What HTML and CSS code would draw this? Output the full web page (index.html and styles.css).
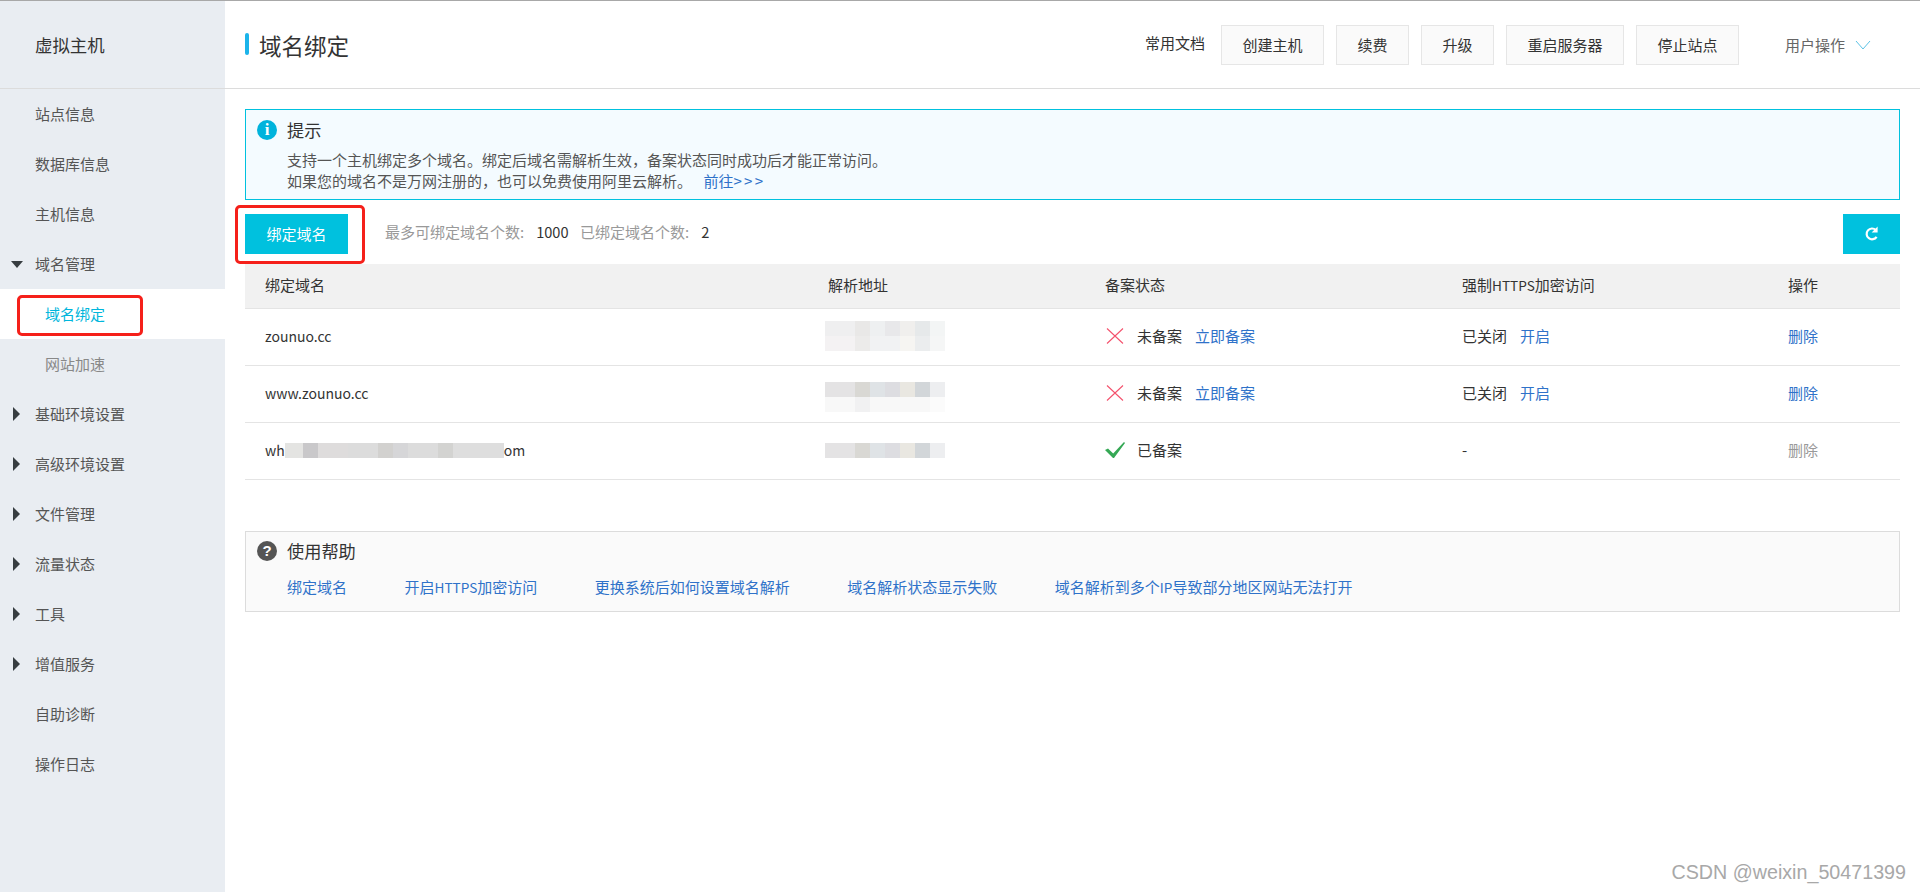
FILE: index.html
```html
<!DOCTYPE html>
<html lang="zh-CN">
<head>
<meta charset="utf-8">
<title>域名绑定</title>
<link rel="stylesheet" href="styles.css">
</head>
<body>
<div class="app">
  <aside class="sidebar">
    <div class="side-title">虚拟主机</div>
    <nav class="nav">
      <a class="nav-item">站点信息</a>
      <a class="nav-item">数据库信息</a>
      <a class="nav-item">主机信息</a>
      <a class="nav-item"><i class="tri tri-down"></i>域名管理</a>
      <a class="nav-item sub active">域名绑定</a>
      <a class="nav-item sub">网站加速</a>
      <a class="nav-item"><i class="tri tri-right"></i>基础环境设置</a>
      <a class="nav-item"><i class="tri tri-right"></i>高级环境设置</a>
      <a class="nav-item"><i class="tri tri-right"></i>文件管理</a>
      <a class="nav-item"><i class="tri tri-right"></i>流量状态</a>
      <a class="nav-item"><i class="tri tri-right"></i>工具</a>
      <a class="nav-item"><i class="tri tri-right"></i>增值服务</a>
      <a class="nav-item">自助诊断</a>
      <a class="nav-item">操作日志</a>
    </nav>
  </aside>
  <main class="main">
    <header class="topbar">
      <h1 class="page-title">域名绑定</h1>
      <div class="actions">
        <span class="docs">常用文档</span>
        <button class="btn">创建主机</button>
        <button class="btn">续费</button>
        <button class="btn">升级</button>
        <button class="btn">重启服务器</button>
        <button class="btn">停止站点</button>
        <span class="user-menu">用户操作
          <svg class="chev" width="16" height="10" viewBox="0 0 16 10"><path d="M1 1l7 8 7-8" fill="none" stroke="#5cc3e6" stroke-width="1"/></svg>
        </span>
      </div>
    </header>
    <div class="content">
      <section class="alert">
        <div class="box-head"><span class="badge badge-info">i</span><span class="box-title">提示</span></div>
        <p class="alert-line">支持一个主机绑定多个域名。绑定后域名需解析生效，备案状态同时成功后才能正常访问。</p>
        <p class="alert-line">如果您的域名不是万网注册的，也可以免费使用阿里云解析。 <a class="link go">前往<span class="arrows">&gt;&gt;&gt;</span></a></p>
      </section>
      <div class="toolbar">
        <button class="btn-primary">绑定域名</button>
        <div class="stats">
          <span class="muted">最多可绑定域名个数:</span><span class="num">1000</span>
          <span class="muted">已绑定域名个数:</span><span class="num">2</span>
        </div>
        <button class="btn-refresh" aria-label="刷新">
          <svg width="16" height="18" viewBox="0 0 16 18"><path d="M12.6 11.8A5.4 5.4 0 1 1 11.8 5" fill="none" stroke="#fff" stroke-width="2.2"/><path d="M13.6 1.6v6h-6z" fill="#fff"/></svg>
        </button>
      </div>
      <table class="table">
        <thead>
          <tr><th class="c1">绑定域名</th><th class="c2">解析地址</th><th class="c3">备案状态</th><th class="c4">强制<span class="latin">HTTPS</span>加密访问</th><th class="c5">操作</th></tr>
        </thead>
        <tbody>
          <tr>
            <td class="domain">zounuo.cc</td>
            <td><div class="ip ip-a"></div><div class="ip ip-b"></div></td>
            <td><span class="status"><svg class="st-icon" width="18" height="16" viewBox="0 0 18 16"><path d="M1 .5l16 15M17 .5l-16 15" stroke="#f4516c" stroke-width="1.1" fill="none"/></svg>未备案<a class="link st-link">立即备案</a></span></td>
            <td>已关闭<a class="link https-link">开启</a></td>
            <td><a class="link">删除</a></td>
          </tr>
          <tr>
            <td class="domain">www.zounuo.cc</td>
            <td><div class="ip ip-shift ip-c"></div><div class="ip ip-d"></div></td>
            <td><span class="status"><svg class="st-icon" width="18" height="16" viewBox="0 0 18 16"><path d="M1 .5l16 15M17 .5l-16 15" stroke="#f4516c" stroke-width="1.1" fill="none"/></svg>未备案<a class="link st-link">立即备案</a></span></td>
            <td>已关闭<a class="link https-link">开启</a></td>
            <td><a class="link">删除</a></td>
          </tr>
          <tr>
            <td class="domain">wh<span class="name-mask"></span>om</td>
            <td><div class="ip ip-c"></div></td>
            <td><span class="status"><svg class="st-icon" width="20" height="16" viewBox="0 0 20 16"><path d="M0 8l3-1.600L8.200 11.500 19 0l1 1L9 16H8z" fill="#35a855"/></svg>已备案</span></td>
            <td>-</td>
            <td><a class="link disabled">删除</a></td>
          </tr>
        </tbody>
      </table>
      <section class="help">
        <div class="box-head"><span class="badge badge-help">?</span><span class="box-title">使用帮助</span></div>
        <div class="help-links">
          <a class="link">绑定域名</a>
          <a class="link">开启<span class="latin">HTTPS</span>加密访问</a>
          <a class="link">更换系统后如何设置域名解析</a>
          <a class="link">域名解析状态显示失败</a>
          <a class="link">域名解析到多个<span class="latin">IP</span>导致部分地区网站无法打开</a>
        </div>
      </section>
    </div>
  </main>
</div>
<div class="mark mark-side"></div>
<div class="mark mark-btn"></div>
<div class="watermark">CSDN @weixin_50471399</div>
</body>
</html>
```

FILE: styles.css
```css
* { box-sizing: border-box; }
html, body { margin: 0; height: 100%; }
body {
  position: relative;
  height: 892px;
  overflow: hidden;
  background: #fff;
  color: #333;
  font-family: "Noto Sans CJK SC", "Noto Sans", sans-serif;
  font-size: 15px;
  line-height: 20px;
  border-top: 1px solid #a8a8a8;
}
a { cursor: pointer; }
p, h1 { margin: 0; }
button { font: inherit; cursor: pointer; }
.latin { font-size: 13.6px; }

.app { display: flex; height: 891px; }

.sidebar { width: 225px; flex: none; background: #e9edf2; }
.side-title {
  height: 88px;
  padding-left: 35px;
  display: flex;
  align-items: center;
  font-size: 17.4px;
  color: #333;
  border-bottom: 1px solid #dcdcdc;
}
.nav-item {
  display: flex;
  align-items: center;
  position: relative;
  height: 50px;
  padding-left: 35px;
  color: #555;
}
.nav-item.sub { padding-left: 45px; color: #888; }
.nav-item.active { background: #fff; color: #00b6dc; }
.tri { position: absolute; width: 0; height: 0; border-style: solid; border-color: transparent; }
.tri-down { left: 11px; top: 22px; border-width: 7px 6px 0; border-top-color: #373d41; }
.tri-right { left: 13px; top: 18px; border-width: 7px 0 7px 7px; border-left-color: #373d41; }

.main { flex: 1; min-width: 0; }
.topbar {
  height: 88px;
  padding: 0 49px 0 20px;
  display: flex;
  align-items: center;
  justify-content: space-between;
  border-bottom: 1px solid #dcdcdc;
}
.page-title {
  font-size: 22.5px;
  font-weight: 400;
  line-height: 30px;
  padding-left: 14px;
  position: relative;
  color: #333;
}
.page-title::before {
  content: "";
  position: absolute;
  left: 0;
  top: 3px;
  width: 4px;
  height: 22px;
  border-radius: 2px;
  background: #1cb4ea;
}
.actions { display: flex; align-items: center; gap: 12px; }
.docs { margin-right: 4px; position: relative; top: -2px; }
.btn {
  height: 40px;
  padding: 0 20.5px;
  background: #fafafa;
  border: 1px solid #e6e6e6;
  color: #333;
}
.user-menu { margin-left: 34px; color: #666; display: flex; align-items: center; gap: 10px; }

.content { padding: 20px 20px 0; }
.alert {
  height: 91px;
  padding: 8px 11px 0;
  background: #f4fbff;
  border: 1px solid #00c1de;
}
.box-head { display: flex; align-items: center; height: 24px; }
.badge {
  width: 20px;
  height: 20px;
  border-radius: 50%;
  color: #fff;
  font-weight: 700;
  display: flex;
  align-items: center;
  justify-content: center;
  flex: none;
}
.badge-info { background: #00b3dc; font-family: "Liberation Serif", serif; font-size: 17px; }
.badge-help { background: #555; font-family: "Liberation Sans", sans-serif; font-size: 15px; }
.box-title { margin-left: 10px; font-size: 17.2px; color: #333; }
.alert-line { padding-left: 30px; line-height: 20.5px; color: #555; }
.alert-line:first-of-type { margin-top: 8px; }
.link { color: #2f72c9; }
.go { margin-left: 8px; }
.arrows { letter-spacing: 2.4px; }

.toolbar { display: flex; align-items: center; margin-top: 14px; height: 40px; }
.btn-primary {
  width: 103px;
  height: 40px;
  border: 0;
  background: #00c1de;
  color: #fff;
}
.stats { flex: 1; margin-left: 37px; position: relative; top: -2px; }
.muted { color: #999; }
.num { margin: 0 8px 0 12px; color: #333; font-size: 14.6px; }
.btn-refresh {
  width: 57px;
  height: 40px;
  border: 0;
  background: #00c1de;
  display: flex;
  align-items: center;
  justify-content: center;
}

.table { width: 100%; margin-top: 10px; border-collapse: collapse; table-layout: fixed; }
.table th {
  height: 44px;
  padding: 0 0 2px 20px;
  background: #f1f1f1;
  font-weight: 400;
  text-align: left;
  color: #333;
  border-bottom: 1px solid #e4e4e4;
}
.table td {
  height: 57px;
  padding: 0 0 1px 20px;
  border-bottom: 1px solid #e4e4e4;
  color: #333;
}
.table .domain { font-size: 14px; }
.c1 { width: 563px; }
.c2 { width: 277px; }
.c3 { width: 357px; }
.c4 { width: 326px; }
.status { display: flex; align-items: center; }
.st-icon { width: 20px; margin-right: 12px; flex: none; }
.st-link { margin-left: 13px; }
.https-link { margin-left: 13px; }
.disabled { color: #999; }

.ip { width: 120px; height: 15px; margin-left: -3px; }
.ip-shift { margin-top: 7px; }
.ip-a { background: linear-gradient(90deg, #efeff0 0 30px, #e9e8e7 30px 45px, #eef0f1 45px 60px, #e8e8ea 60px 75px, #f0efed 75px 90px, #e6e9ea 90px 105px, #f3f5f5 105px); }
.ip-b { background: linear-gradient(90deg, #f4f2f3 0 30px, #ecebea 30px 45px, #f1f2f3 45px 75px, #f6f5f2 75px 90px, #ebedee 90px 105px, #f5f6f6 105px); }
.ip-c { background: linear-gradient(90deg, #e4e3e4 0 30px, #d9d8d4 30px 45px, #dfe3e6 45px 60px, #dddde1 60px 75px, #e9e7e1 75px 90px, #d2d6d9 90px 105px, #edeef0 105px); }
.ip-d { background: linear-gradient(90deg, #f8f8f8 0 30px, #f1f1f2 30px 45px, #f8f8f8 45px 105px, #fbfbfb 105px); }
.name-mask {
  display: inline-block;
  width: 219px;
  height: 15px;
  vertical-align: -2px;
  background: linear-gradient(90deg, #e4e4e2 0 18px, #c9c8ca 18px 33px, #dedcdc 33px 63px, #dcdcdc 63px 93px, #d2d1cf 93px 108px, #d6d6d8 108px 123px, #dcdcdc 123px 153px, #d3d3d1 153px 168px, #dedede 168px);
}

.help {
  height: 81px;
  margin-top: 51px;
  padding: 7px 11px 0;
  background: #fafafa;
  border: 1px solid #dcdcdc;
}
.help-links { display: flex; gap: 57.5px; padding-left: 30px; margin-top: 14px; }

.mark { position: absolute; border: 3.5px solid #f5201a; border-radius: 5px; }
.mark-side { left: 17px; top: 294px; width: 126px; height: 41px; }
.mark-btn { left: 235px; top: 204px; width: 130px; height: 59px; }

.watermark {
  position: absolute;
  right: 14px;
  bottom: 9px;
  font-family: "Liberation Sans", sans-serif;
  font-size: 19.7px;
  line-height: 22px;
  color: #a8a8a8;
}
```
